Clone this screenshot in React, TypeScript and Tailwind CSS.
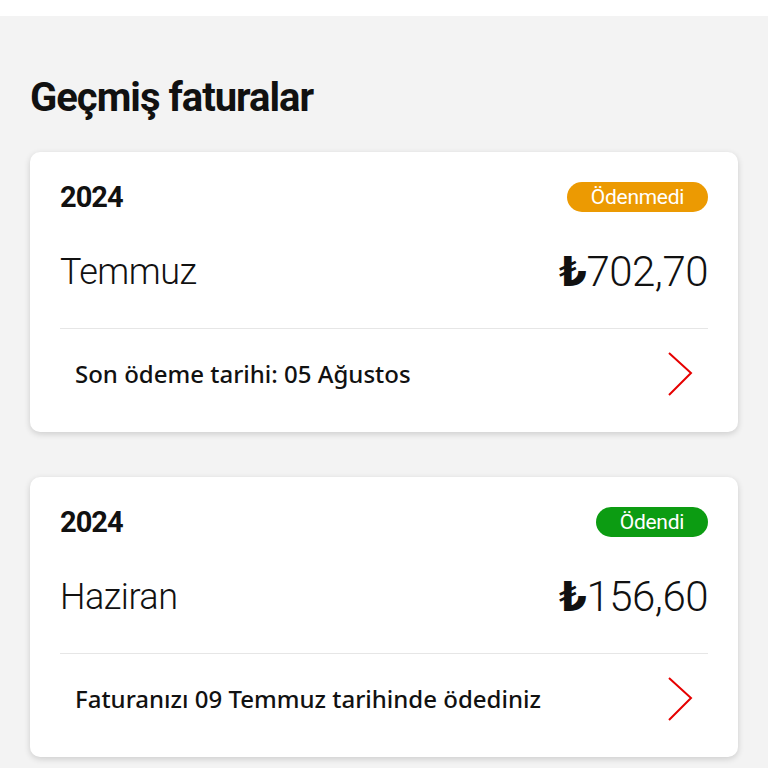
import React from 'react';

type Bill = {
  year: string;
  month: string;
  amount: string;
  status: string;
  statusClass: string;
  note: string;
};

const bills: Bill[] = [
  {
    year: '2024',
    month: 'Temmuz',
    amount: '702,70',
    status: 'Ödenmedi',
    statusClass: 'bg-[#ec9a02]',
    note: 'Son ödeme tarihi: 05 Ağustos',
  },
  {
    year: '2024',
    month: 'Haziran',
    amount: '156,60',
    status: 'Ödendi',
    statusClass: 'bg-[#0c9c12]',
    note: 'Faturanızı 09 Temmuz tarihinde ödediniz',
  },
];

const Chevron = () => (
  <svg width="28" height="46" viewBox="0 0 28 46" fill="none" className="shrink-0">
    <path d="M3 2 L25 22 L3 44" stroke="#e60000" strokeWidth="2" strokeLinejoin="miter" />
  </svg>
);

const BillCard = ({ bill }: { bill: Bill }) => (
  <div className="bg-white rounded-[10px] shadow-[0_2px_6px_rgba(0,0,0,0.16)] px-[30px] pt-[30px] pb-[13px] flex flex-col">
    {/* year + status */}
    <div className="h-[30px] flex items-center justify-between">
      <span className="font-['Roboto',sans-serif] font-bold text-[29px] leading-none tracking-[-1px] text-[#111]">
        {bill.year}
      </span>
      <span
        className={`${bill.statusClass} h-[30px] rounded-full px-[24px] flex items-center text-white text-[21px] font-['Roboto',sans-serif] tracking-[-0.3px] leading-none`}
      >
        {bill.status}
      </span>
    </div>

    {/* month + amount */}
    <div className="mt-[30px] h-[60px] flex items-center justify-between">
      <span className="font-['Roboto',sans-serif] font-light text-[36px] leading-none text-[#111] tracking-[-0.5px]">
        {bill.month}
      </span>
      <span className="font-['Roboto',sans-serif] font-light text-[42px] leading-none text-[#111] tracking-[-0.5px] flex items-baseline">
        <span className="font-bold text-[40px] font-['DejaVu_Sans',sans-serif]">₺</span>
        {bill.amount}
      </span>
    </div>
    <div className="h-[27px] border-b border-[#e6e6e6]" />

    {/* footer */}
    <div className="h-[90px] flex items-center justify-between pl-[15px] pr-[14px]">
      <span className="font-['Noto_Sans',sans-serif] font-medium text-[24px] text-[#111]">
        {bill.note}
      </span>
      <Chevron />
    </div>
  </div>
);

export default function App() {
  return (
    <div className="w-[768px] h-[768px] overflow-hidden bg-[#f3f3f3] font-['Roboto',sans-serif]">
      <div className="h-[16px] bg-white" />
      <div className="px-[30px] pt-[62px]">
        <h1 className="font-['Roboto',sans-serif] font-bold text-[40px] leading-none tracking-[-1px] text-[#111] mb-[34px]">
          Geçmiş faturalar
        </h1>
        <div className="flex flex-col gap-[45px]">
          {bills.map((b, i) => (
            <BillCard key={i} bill={b} />
          ))}
        </div>
      </div>
    </div>
  );
}
